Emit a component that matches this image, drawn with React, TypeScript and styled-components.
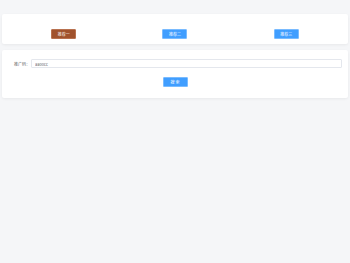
import styled, { createGlobalStyle } from 'styled-components';

const GlobalStyle = createGlobalStyle`
	body {
		margin: 0;
		background: #f5f6f8;
		font-family: "Noto Sans CJK SC", "Liberation Sans", sans-serif;
	}
`;

const tabs = ['推荐一', '推荐二', '推荐三'];

const App = () => {
	return (
		<Page>
			<GlobalStyle />
			<Card $padding="15px 6px 5px">
				<TabRow>
					{tabs.map((tab, i) => (
						<TabCell key={tab}>
							<Button $active={i === 0}>{tab}</Button>
						</TabCell>
					))}
				</TabRow>
			</Card>
			<Card $padding="9px 6px 11px">
				<FormRow>
					<Label>推广码：</Label>
					<Input defaultValue="aa00cc" />
				</FormRow>
				<Actions>
					<Button>搜 索</Button>
				</Actions>
			</Card>
		</Page>
	);
};

export default App;

const Page = styled.div`
	display: flex;
	flex-direction: column;
	gap: 6px;
	padding: 14px 2px;
`;

const Card = styled.div<{ $padding: string }>`
	background: #fff;
	border-radius: 2px;
	box-shadow: 0 1px 3px rgba(0, 0, 0, 0.06);
	padding: ${(p) => p.$padding};
`;

const TabRow = styled.div`
	display: grid;
	grid-template-columns: repeat(3, 1fr);
`;

const TabCell = styled.div`
	display: flex;
	justify-content: center;
`;

const Button = styled.button<{ $active?: boolean }>`
	width: 25px;
	height: 10px;
	padding: 0;
	border: 1px solid ${(p) => (p.$active ? '#b8714f' : '#79bbff')};
	border-radius: 1px;
	background: ${(p) => (p.$active ? '#a0522d' : '#409eff')};
	color: #fff;
	font-family: inherit;
	font-size: 4px;
	line-height: 8px;
	display: flex;
	align-items: center;
	justify-content: center;
`;

const FormRow = styled.div`
	display: flex;
	align-items: center;
	padding-left: 6px;
`;

const Label = styled.span`
	font-size: 4px;
	color: #606266;
	width: 17px;
	white-space: nowrap;
`;

const Input = styled.input`
	flex: 1;
	min-width: 0;
	height: 9px;
	box-sizing: border-box;
	border: 1px solid #e4e7ed;
	border-radius: 1px;
	padding: 0 3px;
	font-family: inherit;
	font-size: 4px;
	color: #606266;
	outline: none;
`;

const Actions = styled.div`
	display: flex;
	justify-content: center;
	margin-top: 9px;
`;
